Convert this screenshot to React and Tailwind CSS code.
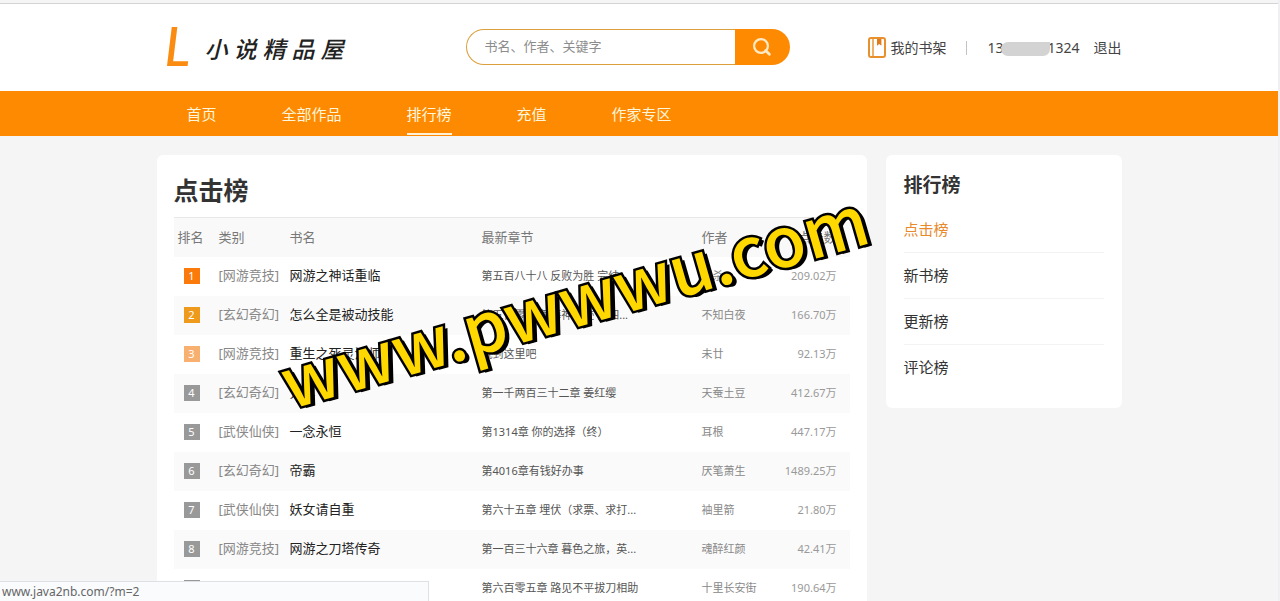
import React, { useState } from 'react';

const navItems = ['首页', '全部作品', '排行榜', '充值', '作家专区'];

const rankTabs = ['点击榜', '新书榜', '更新榜', '评论榜'];

const books = [
  { type: '网游竞技', name: '网游之神话重临', chapter: '第五百八十八 反败为胜 完结', author: '罗杀', count: '209.02万' },
  { type: '玄幻奇幻', name: '怎么全是被动技能', chapter: '第五百零一章 海神遗迹 第四...', author: '不知白夜', count: '166.70万' },
  { type: '网游竞技', name: '重生之死灵法师', chapter: '就到这里吧', author: '未廿', count: '92.13万' },
  { type: '玄幻奇幻', name: '元尊', chapter: '第一千两百三十二章 姜红缨', author: '天蚕土豆', count: '412.67万' },
  { type: '武侠仙侠', name: '一念永恒', chapter: '第1314章 你的选择（终）', author: '耳根', count: '447.17万' },
  { type: '玄幻奇幻', name: '帝霸', chapter: '第4016章有钱好办事', author: '厌笔萧生', count: '1489.25万' },
  { type: '武侠仙侠', name: '妖女请自重', chapter: '第六十五章 埋伏（求票、求打...', author: '袖里箭', count: '21.80万' },
  { type: '网游竞技', name: '网游之刀塔传奇', chapter: '第一百三十六章 暮色之旅，英...', author: '魂醉红颜', count: '42.41万' },
  { type: '网游竞技', name: '', chapter: '第六百零五章 路见不平拔刀相助', author: '十里长安街', count: '190.64万' },
];

const badgeColors = ['bg-[#fb7a0c]', 'bg-[#ee9a1c]', 'bg-[#f8b070]'];

const Header = () => (
  <header className="border-t border-[#d4d4d4] bg-white">
    <div className="mx-auto flex h-[87px] w-[965px] items-center">
      <a href="#" className="flex w-[309px] items-center gap-3 pb-1 pl-2 italic">
        <span className="w-7 font-['Lato'] text-[54px] leading-none font-medium text-[#fb8c12]">L</span>
        <span className="pt-2 text-[23px] font-medium whitespace-nowrap text-[#222]">小 说 精 品 屋</span>
      </a>

      <form className="mb-[2px] flex h-9 w-[324px]" onSubmit={(e) => e.preventDefault()}>
        <input
          type="text"
          aria-label="搜索"
          placeholder="书名、作者、关键字"
          className="min-w-0 flex-1 rounded-l-full border border-r-0 border-[#dba03c] pl-[18px] text-[13px] text-[#333] outline-none placeholder:text-[#8c8c8c]"
        />
        <button
          type="submit"
          aria-label="搜索"
          className="flex w-[55px] items-center justify-center rounded-r-full bg-[#fe8a01]"
        >
          <svg width="20" height="20" viewBox="0 0 20 20" fill="none" stroke="#ffeac4" strokeWidth="2.2">
            <circle cx="9" cy="9" r="6.9" />
            <path d="M13.6 13.6 L17.4 17.2" strokeWidth="2.8" strokeLinecap="round" />
          </svg>
        </button>
      </form>

      <div className="ml-auto flex items-center text-[14px] text-[#444]">
        <a href="#" className="flex items-center gap-1">
          <svg width="18" height="21" viewBox="0 0 18 21" fill="none" stroke="#e8912c" strokeWidth="2">
            <rect x="1" y="1" width="16" height="19" rx="2" />
            <path d="M5 1.5 V19.5" strokeWidth="1.4" />
            <path d="M9 2 H13.4 V8.8 L11.2 7 L9 8.8 Z" fill="#e07c1c" stroke="none" />
          </svg>
          <span>我的书架</span>
        </a>
        <span className="mx-5 h-[14px] w-px bg-[#c4c4c4]"></span>
        <a href="#" className="relative mr-[14px] flex">
          <span className="pr-11">13</span>
          <span>1324</span>
          <span className="absolute top-[5px] left-[14px] h-[14px] w-[49px] rounded-b-lg rounded-tl-lg bg-[#d3d3d3]"></span>
        </a>
        <a href="#">退出</a>
      </div>
    </div>
  </header>
);

const NavBar = () => (
  <nav className="bg-[#fe8a01]">
    <ul className="mx-auto flex h-[45px] w-[965px] gap-[65px] pl-[30px] text-[15px] text-[#fff6dc]">
      {navItems.map((item) => (
        <li key={item} className="flex">
          <a
            href="#"
            className={`mb-px border-b-2 pt-3 leading-[22px] ${
              item === '排行榜' ? 'border-[#fff0d8]' : 'border-transparent'
            }`}
          >
            {item}
          </a>
        </li>
      ))}
    </ul>
  </nav>
);

const RankTable = ({ title }) => (
  <section className="w-[710px] rounded-md bg-white px-[17px] pt-4">
    <h1 className="h-[46px] text-[25px] leading-[38px] font-bold text-[#333]">{title}</h1>
    <table className="w-full table-fixed border-t border-[#e8e8e8] text-left text-[13px]">
      <colgroup>
        <col className="w-[45px]" />
        <col className="w-[71px]" />
        <col className="w-[192px]" />
        <col className="w-[220px]" />
        <col className="w-[70px]" />
        <col />
      </colgroup>
      <thead>
        <tr className="h-[39px] bg-[#f9f9f9] text-[#777]">
          <th className="pl-1 font-normal">排名</th>
          <th className="font-normal">类别</th>
          <th className="font-normal">书名</th>
          <th className="font-normal">最新章节</th>
          <th className="font-normal">作者</th>
          <th className="pr-[13px] text-right font-normal">点击数</th>
        </tr>
      </thead>
      <tbody>
        {books.map((book, i) => (
          <tr key={i} className="h-[39px] even:bg-[#fafafa]">
            <td className="pl-[10px]">
              <span
                className={`block size-4 text-center text-[11px] leading-4 text-white ${badgeColors[i] || 'bg-[#999]'}`}
              >
                {i + 1}
              </span>
            </td>
            <td className="whitespace-nowrap text-[#888]">
              <a href="#">[{book.type}]</a>
            </td>
            <td className="text-[#222]">
              <a href="#">{book.name}</a>
            </td>
            <td className="text-[11px] text-[#555]">
              <a href="#">{book.chapter}</a>
            </td>
            <td className="text-[11px] text-[#888]">
              <a href="#">{book.author}</a>
            </td>
            <td className="pr-[13px] text-right text-[11px] text-[#999]">{book.count}</td>
          </tr>
        ))}
      </tbody>
    </table>
  </section>
);

const SideBar = ({ active, onChange }) => (
  <aside className="w-[236px] rounded-md bg-white px-[18px] pt-4 pb-[18px]">
    <h2 className="h-9 text-[19px] leading-7 font-bold text-[#333]">排行榜</h2>
    <ul className="divide-y divide-[#f3f3f3] text-[15px]">
      {rankTabs.map((tab) => (
        <li key={tab}>
          <button
            type="button"
            onClick={() => onChange(tab)}
            className={`block h-[45px] w-full text-left ${active === tab ? 'text-[#e8892b]' : 'text-[#333]'}`}
          >
            {tab}
          </button>
        </li>
      ))}
    </ul>
  </aside>
);

const Watermark = () => (
  <div className="pointer-events-none absolute top-[247px] left-[270px] -rotate-[16deg] font-['Noto_Sans_CJK_SC','Noto_Sans',sans-serif] text-[69px] leading-[100px] font-medium whitespace-nowrap text-[#ffd800] [-webkit-text-stroke:5px_#000] [paint-order:stroke_fill] [text-shadow:4px_3px_0_#000]">
    www.pwwwu.com
  </div>
);

const App = () => {
  const [active, setActive] = useState('点击榜');

  return (
    <div className="relative h-screen overflow-hidden border-r-2 border-[#f0f0f3] bg-[#f5f5f5] pt-[3px] font-['Noto_Sans','Noto_Sans_CJK_SC',sans-serif]">
      <Header />
      <NavBar />
      <main className="mx-auto mt-[19px] flex w-[965px] items-start justify-between">
        <RankTable title={active} />
        <SideBar active={active} onChange={setActive} />
      </main>
      <Watermark />
      <div className="fixed bottom-0 left-0 h-5 w-[429px] border-t border-r border-[#dde1e6] bg-[#f9fbfd] pl-[2px] font-['Noto_Sans',sans-serif] text-[12px] leading-5 text-[#666]">
        www.java2nb.com/?m=2
      </div>
    </div>
  );
};

export default App;
